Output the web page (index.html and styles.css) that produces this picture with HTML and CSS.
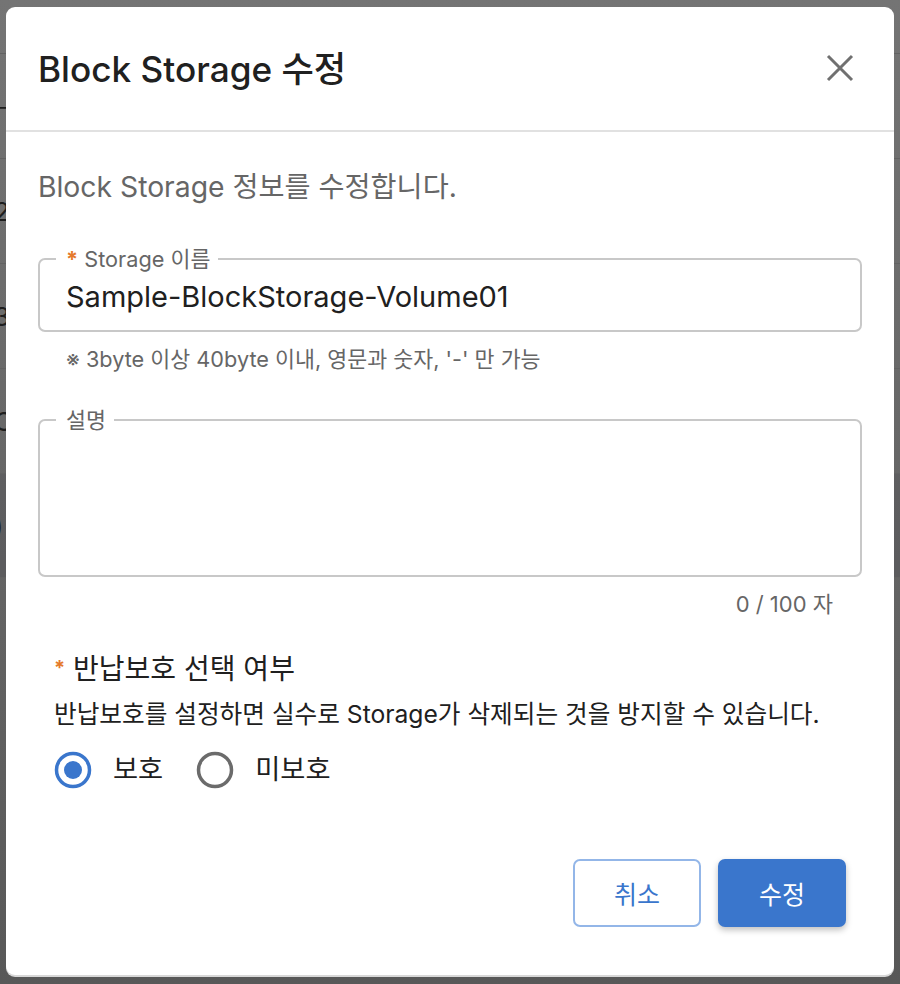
FILE: index.html
```html
<!DOCTYPE html>
<html lang="ko">
<head>
<meta charset="utf-8">
<title>Block Storage 수정</title>
<link rel="stylesheet" href="styles.css">
</head>
<body>
<div class="page">
  <div class="bg-row"><span class="bg-text">ㅡ</span></div>
  <div class="bg-row"><span class="bg-text">2</span></div>
  <div class="bg-row"><span class="bg-text">3</span></div>
  <div class="bg-row"><span class="bg-text">C</span></div>
  <div class="bg-row bg-row-dark"><span class="bg-text">)</span></div>
</div>

<div class="dialog">
  <div class="header">
    <h1 class="title">Block Storage 수정</h1>
    <button class="close" aria-label="닫기">
      <svg width="28" height="28" viewBox="0 0 28 28"><path d="M2 2 L26 26 M26 2 L2 26" stroke="#707070" stroke-width="3" fill="none"/></svg>
    </button>
  </div>
  <div class="body">
    <p class="subtitle">Block Storage 정보를 수정합니다.</p>

    <fieldset class="field field-name">
      <legend class="legend"><span class="req">*</span> Storage 이름</legend>
      <div class="input-value">Sample-BlockStorage-Volume01</div>
    </fieldset>
    <p class="helper">※ 3byte 이상 40byte 이내, 영문과 숫자, '-' 만 가능</p>

    <fieldset class="field field-desc">
      <legend class="legend">설명</legend>
      <div class="textarea"></div>
    </fieldset>
    <p class="counter">0 / 100 자</p>

    <div class="section">
      <h2 class="section-title"><span class="req req-lg">*</span> 반납보호 선택 여부</h2>
      <p class="section-desc">반납보호를 설정하면 실수로 Storage가 삭제되는 것을 방지할 수 있습니다.</p>
      <div class="radios">
        <label class="radio">
          <svg width="38" height="38" viewBox="0 0 38 38"><circle cx="19" cy="19" r="16.5" stroke="#3a76cc" stroke-width="3.5" fill="none"/><circle cx="19" cy="19" r="9" fill="#3a76cc"/></svg>
          <span class="radio-label">보호</span>
        </label>
        <label class="radio">
          <svg width="38" height="38" viewBox="0 0 38 38"><circle cx="19" cy="19" r="16.5" stroke="#6b6b6b" stroke-width="3.5" fill="none"/></svg>
          <span class="radio-label">미보호</span>
        </label>
      </div>
    </div>

    <div class="actions">
      <button class="btn btn-outline">취소</button>
      <button class="btn btn-primary">수정</button>
    </div>
  </div>
</div>
</body>
</html>
```

FILE: styles.css
```css
* { box-sizing: border-box; }

html, body {
  margin: 0;
  padding: 0;
  width: 900px;
  height: 984px;
  overflow: hidden;
}

body {
  background: linear-gradient(#747474, #585858);
  font-family: "Inter", "Noto Sans CJK KR", sans-serif;
  position: relative;
}

.page {
  display: flex;
  flex-direction: column;
  padding-top: 53px;
}

.bg-row {
  height: 105px;
  border-top: 1px solid #626262;
  display: flex;
  align-items: center;
}

.bg-row:last-child { border-bottom: 1px solid #626262; }

.bg-row-dark { background: rgba(40, 40, 60, 0.12); }

.bg-text {
  margin-left: -6px;
  font-size: 26px;
  color: #1e1e1e;
}

.dialog {
  position: absolute;
  left: 6px;
  top: 7px;
  width: 888px;
  height: 968px;
  background: #fff;
  border-radius: 9px;
  box-shadow: 0 2px 0 #d8d8d8;
  display: flex;
  flex-direction: column;
}

.header {
  height: 125px;
  padding: 0 40px 0 32px;
  display: flex;
  align-items: center;
  justify-content: space-between;
  border-bottom: 2px solid #e1e1e1;
}

.title {
  margin: 0;
  font-size: 35.2px;
  line-height: 44px;
  font-weight: 500;
  color: #202020;
}

.close {
  border: 0;
  background: none;
  padding: 0;
  width: 28px;
  height: 28px;
  display: flex;
  margin-bottom: 1px;
}

.body {
  padding: 39px 48px 0 32px;
  display: flex;
  flex-direction: column;
}

.subtitle {
  margin: 0;
  font-size: 28.3px;
  line-height: 32px;
  color: #666;
}

.field {
  margin: 44px 0 0;
  padding: 0 16px;
  border: 2px solid #c8c8c8;
  border-radius: 7px;
  width: 824px;
  min-width: 0;
}

.legend {
  padding: 0 8px 0 10px;
  font-size: 21.7px;
  line-height: 24px;
  color: #666;
}

.req {
  color: #e57a2b;
  font-weight: 700;
}

.input-value {
  height: 52px;
  line-height: 52px;
  padding: 0 0 0 10px;
  font-size: 29px;
  color: #202020;
  margin-bottom: 7px;
}

.helper {
  margin: 15px 0 0 28px;
  font-size: 21.7px;
  line-height: 24px;
  color: #666;
}

.field-desc { margin-top: 37px; }

.textarea { height: 143px; }

.counter {
  margin: 15px 0 0;
  width: 824px;
  padding-right: 29px;
  text-align: right;
  font-size: 22px;
  line-height: 24px;
  color: #666;
}

.section {
  padding-left: 16px;
  display: flex;
  flex-direction: column;
}

.section-title {
  margin: 36px 0 0;
  font-size: 28px;
  line-height: 32px;
  font-weight: 400;
  color: #202020;
}

.req-lg { font-size: 20px; vertical-align: 4px; }

.section-desc {
  margin: 15px 0 0;
  font-size: 24.65px;
  line-height: 28px;
  color: #202020;
}

.radios {
  margin-top: 23px;
  display: flex;
  gap: 33px;
}

.radio {
  display: flex;
  align-items: center;
  gap: 21px;
}

.radio svg { display: block; }

.radio-label {
  font-size: 27.3px;
  line-height: 38px;
  color: #202020;
}

.actions {
  margin-top: 70px;
  display: flex;
  justify-content: flex-end;
  gap: 17px;
}

.btn {
  width: 128px;
  height: 68px;
  border-radius: 7px;
  font-family: "Inter", "Noto Sans CJK KR", sans-serif;
  font-size: 25px;
  cursor: pointer;
}

.btn-outline {
  background: #fff;
  border: 2px solid #93b6e8;
  color: #3a76cc;
}

.btn-primary {
  background: #3a76cc;
  border: 0;
  color: #fff;
  box-shadow: 0 3px 6px rgba(0, 0, 0, 0.25);
}
```
